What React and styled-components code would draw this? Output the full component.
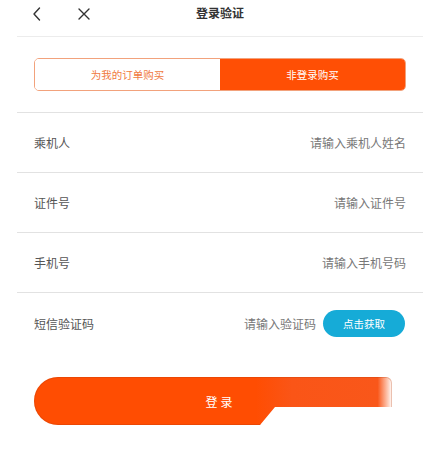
import React from "react";
import styled, { createGlobalStyle } from "styled-components";

const Global = createGlobalStyle`
  html, body { margin: 0; padding: 0; background: #fff; }
  body { font-family: "Noto Sans CJK SC", "Noto Sans", sans-serif; }
  * { box-sizing: border-box; }
`;

const Page = styled.div`
  width: 442px;
  min-height: 453px;
  padding: 0 19px 0 17px;
  background: #fff;
`;

const Header = styled.header`
  position: relative;
  height: 37px;
  display: flex;
  align-items: flex-start;
  padding-top: 5px;
  border-bottom: 1px solid #ececec;
`;

const IconBtn = styled.button`
  border: 0;
  background: none;
  padding: 0;
  width: 18px;
  height: 18px;
  margin-left: ${(p) => p.$ml}px;
  display: flex;
  align-items: center;
  justify-content: center;
  color: #333;
`;

const Title = styled.h1`
  position: absolute;
  left: 0;
  right: 0;
  top: 3px;
  margin: 0;
  text-align: center;
  font-size: 12px;
  font-weight: 700;
  color: #333;
  line-height: 20px;
  pointer-events: none;
`;

const SegmentWrap = styled.div`
  padding: 21px 0 0 17px;
  height: 76px;
  border-bottom: 1px solid #e2e2e2;
`;

const Segmented = styled.div`
  display: grid;
  grid-template-columns: 1fr 1fr;
  width: 372px;
  height: 33px;
  border: 1px solid #f2a27c;
  border-radius: 5px;
  overflow: hidden;
`;

const Seg = styled.div`
  display: flex;
  align-items: center;
  justify-content: center;
  font-size: 10.5px;
  background: ${(p) => (p.$active ? "#ff4f05" : "#fff")};
  color: ${(p) => (p.$active ? "#fff" : "#f07a3e")};
`;

const Row = styled.div`
  height: 60px;
  display: flex;
  align-items: center;
  padding: 0 17px 0 17px;
  border-bottom: ${(p) => (p.$last ? "none" : "1px solid #e2e2e2")};
`;

const Label = styled.span`
  font-size: 12px;
  color: #555;
  flex: 1;
`;

const Placeholder = styled.span`
  font-size: 12px;
  color: #777;
`;

const CodeBtn = styled.button`
  border: 0;
  width: 82px;
  height: 27px;
  border-radius: 14px;
  background: #16abd7;
  color: #fff;
  font-family: inherit;
  font-size: 10.5px;
  margin-left: 7px;
  margin-right: 1px;
`;

const LoginWrap = styled.div`
  padding: 24px 0 0 17px;
`;

const LoginBtn = styled.button`
  width: 358px;
  height: 48px;
  border: 0;
  border-radius: 24px 6px 6px 24px;
  background: linear-gradient(90deg, #ff4d02 0%, #ff4d02 62%, #fa5517 72%, #f9571a 96%, #fdd2c0 99%, #fff 100%);
  box-shadow: inset 0 0 0 1px rgba(190, 60, 10, 0.3);
  color: #fff;
  font-family: inherit;
  font-size: 12px;
  letter-spacing: 3px;
  padding: 0 0 0 15px;
  clip-path: polygon(0 0, 100% 0, 100% 30px, 241px 30px, 226px 48px, 0 48px);
`;

const rows = [
  { label: "乘机人", ph: "请输入乘机人姓名" },
  { label: "证件号", ph: "请输入证件号" },
  { label: "手机号", ph: "请输入手机号码" },
];

export default function App() {
  return (
    <Page>
      <Global />
      <Header>
        <IconBtn $ml={11} aria-label="back">
          <svg width="14" height="16" viewBox="0 0 14 16">
            <path d="M9.5 2 L4 8 L9.5 14" fill="none" stroke="#333" strokeWidth="1.4" strokeLinecap="round" strokeLinejoin="round" />
          </svg>
        </IconBtn>
        <IconBtn $ml={29} aria-label="close">
          <svg width="14" height="14" viewBox="0 0 14 14">
            <path d="M2 2 L12 12 M12 2 L2 12" fill="none" stroke="#333" strokeWidth="1.4" strokeLinecap="round" />
          </svg>
        </IconBtn>
        <Title>登录验证</Title>
      </Header>
      <SegmentWrap>
        <Segmented>
          <Seg>为我的订单购买</Seg>
          <Seg $active>非登录购买</Seg>
        </Segmented>
      </SegmentWrap>
      {rows.map((r) => (
        <Row key={r.label}>
          <Label>{r.label}</Label>
          <Placeholder>{r.ph}</Placeholder>
        </Row>
      ))}
      <Row $last>
        <Label>短信验证码</Label>
        <Placeholder>请输入验证码</Placeholder>
        <CodeBtn>点击获取</CodeBtn>
      </Row>
      <LoginWrap>
        <LoginBtn>登录</LoginBtn>
      </LoginWrap>
    </Page>
  );
}
